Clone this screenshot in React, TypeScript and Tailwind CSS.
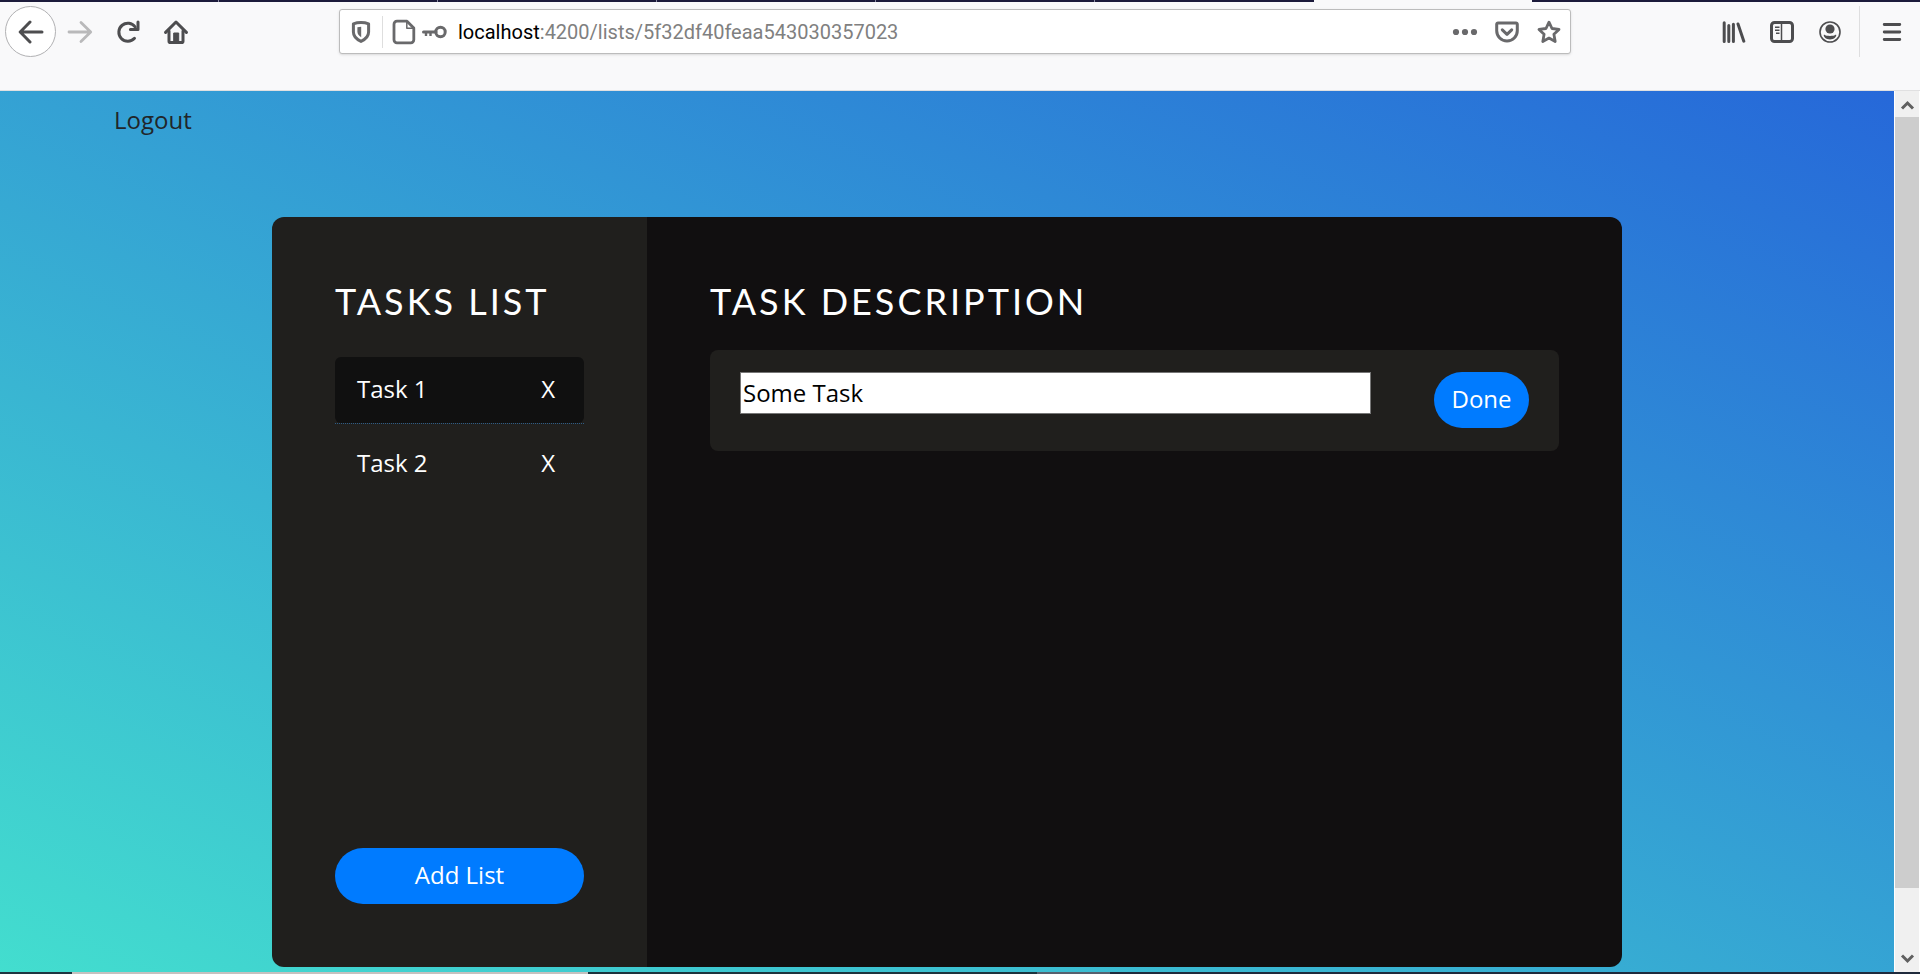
import { useState } from "react";
import type { ReactNode } from "react";

type IconProps = { label: string; children: ReactNode };

function IconButton({ label, children }: IconProps) {
  return (
    <button
      type="button"
      aria-label={label}
      className="flex h-12 w-12 shrink-0 items-center justify-center text-[#4d4d4f]"
    >
      {children}
    </button>
  );
}

function TabStrip() {
  return (
    <div className="flex h-[2px] shrink-0 bg-[#1c1b3b]">
      {[0, 1, 2, 3, 4].map((tab) => (
        <div key={tab} className="w-[219px] border-r border-[#8d8da5]" />
      ))}
      <div className="w-[219px]" />
      <div className="w-[218px] bg-[#f9f9fa]" />
    </div>
  );
}

function AddressBar() {
  return (
    <div className="flex h-[45px] w-[1232px] min-w-0 shrink items-center rounded-[3px] border border-[#bcbcbc] bg-white text-[#69696b] shadow-sm">
      <div className="flex w-[42px] shrink-0 justify-center">
        <svg viewBox="0 0 24 24" className="size-6" fill="none" stroke="currentColor" strokeWidth="3">
          <path d="M12 2.6c3 0 5.600.5 7.600 1.200v8.200c0 4.200-3.300 7.400-7.600 9.400-4.300-2-7.600-5.200-7.600-9.400V3.800C6.400 3.100 9 2.600 12 2.600z" strokeLinejoin="round" />
          <path d="M12.200 6.700v10.500c-2.400-1.300-3.800-3.200-3.800-5.400V7.200c1.200-.3 2.500-.5 3.800-.5z" fill="currentColor" stroke="none" />
        </svg>
      </div>
      <div className="h-8 w-px shrink-0 bg-[#dedede]" />
      <svg viewBox="0 0 24 26" className="ml-[9px] h-[26px] w-6 shrink-0" fill="none" stroke="currentColor" strokeWidth="2.800" strokeLinejoin="round">
        <path d="M5 2.200h10l6.800 6.800v11.800a3 3 0 0 1-3 3H5a3 3 0 0 1-3-3V5.200a3 3 0 0 1 3-3z" />
        <path d="M14.800 2.500v6.700h6.600" strokeWidth="1.500" />
      </svg>
      <svg viewBox="0 0 26 14" className="ml-[6px] h-[14px] w-[26px] shrink-0" fill="none" stroke="currentColor">
        <circle cx="18.500" cy="7" r="4.700" strokeWidth="3" />
        <path d="M1.500 7H14" strokeWidth="3" strokeLinecap="round" />
        <path d="M4 7v4M8.500 7v4" strokeWidth="2.400" />
      </svg>
      <div className="ml-[10px] min-w-0 grow truncate font-['Roboto',sans-serif] text-[20px] leading-7 text-[#808080]">
        <span className="text-black">localhost</span>:4200/lists/5f32df40feaa543030357023
      </div>
      <button type="button" aria-label="Page actions" className="flex w-[42px] shrink-0 justify-center">
        <svg viewBox="0 0 26 8" className="h-2 w-[26px]" fill="currentColor">
          <circle cx="4" cy="4" r="3.100" />
          <circle cx="13" cy="4" r="3.100" />
          <circle cx="22" cy="4" r="3.100" />
        </svg>
      </button>
      <button type="button" aria-label="Save to Pocket" className="flex w-[42px] shrink-0 justify-center">
        <svg viewBox="0 0 24 22" className="h-[22px] w-6" fill="none" stroke="currentColor" strokeWidth="3" strokeLinecap="round" strokeLinejoin="round">
          <path d="M3 2h18a1.300 1.300 0 0 1 1.300 1.300v6.400a10.300 10.300 0 0 1-20.600 0V3.300A1.300 1.300 0 0 1 3 2z" />
          <path d="M7.300 8.800l4.700 4.500 4.700-4.500" />
        </svg>
      </button>
      <button type="button" aria-label="Bookmark this page" className="flex w-[42px] shrink-0 justify-center">
        <svg viewBox="0 0 24 24" className="size-6" fill="none" stroke="currentColor" strokeWidth="2.800" strokeLinejoin="round">
          <path d="M12 2.200l3 6.300 7 .9-5.100 4.900 1.300 7.200-6.200-3.400-6.200 3.400 1.300-7.200L2 9.400l7-.9z" />
        </svg>
      </button>
    </div>
  );
}

function Toolbar() {
  return (
    <header className="flex h-[89px] shrink-0 items-start border-b border-[#e0e0e1] bg-[#f9f9fa] pt-1 pl-[5px]">
      <div className="flex h-[51px] w-full items-center justify-between">
        <nav aria-label="Browser navigation" className="flex items-center">
          <button
            type="button"
            aria-label="Back"
            className="flex size-[51px] items-center justify-center rounded-full border border-[#b1b1b3] bg-white text-[#4d4d4f]"
          >
            <svg viewBox="0 0 26 24" className="h-6 w-[26px]" fill="none" stroke="currentColor" strokeWidth="3" strokeLinecap="round" strokeLinejoin="round">
              <path d="M24 12H2.500M12 2L2.200 12 12 22" />
            </svg>
          </button>
          <IconButton label="Forward">
            <svg viewBox="0 0 26 24" className="h-6 w-[26px]" fill="none" stroke="#b9b9ba" strokeWidth="2.800" strokeLinecap="round" strokeLinejoin="round">
              <path d="M2 12h21.500M14 2.500L23.700 12 14 21.500" />
            </svg>
          </IconButton>
          <IconButton label="Reload">
            <svg viewBox="0 0 24 24" className="size-6" fill="none" stroke="currentColor" strokeWidth="3" strokeLinecap="round">
              <path d="M18.500 18.300A9 9 0 1 1 19.200 7" />
              <path d="M22 2v7.600h-7.600" strokeLinejoin="round" />
            </svg>
          </IconButton>
          <IconButton label="Home">
            <svg viewBox="0 0 24 24" className="size-6" fill="none" stroke="currentColor" strokeWidth="3" strokeLinecap="round" strokeLinejoin="round">
              <path d="M1.600 12.400L12 2l10.400 10.400" />
              <path d="M5 11v10.200a1.300 1.300 0 0 0 1.300 1.300h11.400a1.300 1.300 0 0 0 1.300-1.300V11" />
              <path d="M9.700 22v-9h5v9z" fill="currentColor" strokeWidth="1" />
            </svg>
          </IconButton>
        </nav>
        <AddressBar />
        <div className="flex items-center">
          <IconButton label="Library">
            <svg viewBox="0 0 24 22" className="h-[22px] w-6" fill="none" stroke="currentColor" strokeWidth="3" strokeLinecap="round">
              <path d="M2.200 1.800v18.600M6.800 4.600v15.800M11.400 3.200v17.200M16 3l5.800 17.200" />
            </svg>
          </IconButton>
          <IconButton label="Sidebars">
            <svg viewBox="0 0 24 22" className="h-[22px] w-6" fill="none" stroke="currentColor">
              <rect x="1.500" y="1.500" width="21" height="19" rx="3" strokeWidth="3" />
              <path d="M11.500 2v18" strokeWidth="1.500" />
              <path d="M5 6.300h4.500M5 9.300h4.500M6 12.300h3.500" strokeWidth="1.500" />
            </svg>
          </IconButton>
          <IconButton label="Account">
            <svg viewBox="0 0 24 24" className="size-6" fill="currentColor">
              <circle cx="12" cy="12" r="10" fill="none" stroke="currentColor" strokeWidth="1.600" />
              <circle cx="12" cy="9" r="4.600" />
              <path d="M6 14.500c1.500 1.200 3.500 1.400 6 1.400s4.500-.2 6-1.400c1.200 1.800-2 5-6 5s-7.200-3.200-6-5z" />
            </svg>
          </IconButton>
          <div className="ml-[5px] h-[51px] w-px bg-[#dededf]" />
          <div className="pr-1 pl-2">
            <IconButton label="Menu">
              <svg viewBox="0 0 20 20" className="size-5" fill="none" stroke="currentColor" strokeWidth="2.800" strokeLinecap="round">
                <path d="M2.200 2.500h15.600M2.200 10h15.600M2.200 17.500h15.600" />
              </svg>
            </IconButton>
          </div>
        </div>
      </div>
    </header>
  );
}

function TaskLists() {
  const [selected, setSelected] = useState("Task 1");
  return (
    <aside className="flex w-[375px] shrink-0 flex-col rounded-l-xl bg-[#201f1d] px-[63px] pt-[62px] pb-[63px]">
      <h1 className="font-['Lato',sans-serif] text-4xl leading-[44px] tracking-[3px] whitespace-nowrap">TASKS LIST</h1>
      <ul className="mt-[34px] flex grow flex-col gap-[7px]">
        {["Task 1", "Task 2"].map((name) => (
          <li
            key={name}
            className={
              name === selected
                ? "border-b border-dotted border-[#2d5c86]"
                : "border-b border-transparent"
            }
          >
            <div
              className={
                name === selected
                  ? "flex h-[66px] items-center justify-between rounded-md bg-[#101010] pr-[29px] pb-[2px] pl-[22px]"
                  : "flex h-[66px] items-center justify-between rounded-md pr-[29px] pb-[2px] pl-[22px]"
              }
            >
              <button type="button" onClick={() => setSelected(name)}>
                {name}
              </button>
              <button type="button" aria-label={`Delete ${name}`}>
                X
              </button>
            </div>
          </li>
        ))}
      </ul>
      <button type="button" className="h-14 rounded-full bg-[#007bff] pb-[2px]">
        Add List
      </button>
    </aside>
  );
}

function TaskDescription() {
  return (
    <section className="min-w-0 grow rounded-r-xl bg-[#110f10] px-[63px] pt-[62px]">
      <h2 className="font-['Lato',sans-serif] text-4xl leading-[44px] tracking-[3px]">TASK DESCRIPTION</h2>
      <form
        className="mt-[27px] flex h-[101px] items-start gap-[63px] rounded-lg bg-[#201f1d] px-[30px] pt-[22px]"
        onSubmit={(event) => event.preventDefault()}
      >
        <input
          type="text"
          aria-label="Task description"
          defaultValue="Some Task"
          className="h-[42px] min-w-0 grow border border-[#767676] bg-white px-[2px] pb-[2px] text-black"
        />
        <button type="submit" className="h-14 w-[95px] shrink-0 rounded-full bg-[#007bff] pb-[2px]">
          Done
        </button>
      </form>
    </section>
  );
}

function ScrollBar() {
  return (
    <div aria-hidden="true" className="flex w-[26px] shrink-0 flex-col border-x border-white bg-[#f0f0f0] text-[#606060]">
      <svg viewBox="0 0 24 26" className="h-[26px] w-6 shrink-0" fill="none" stroke="currentColor" strokeWidth="3">
        <path d="M7 17.500l5.500-5.500 5.500 5.500" />
      </svg>
      <div className="grow-[771] bg-[#cdcdcd]" />
      <div className="grow-[58]" />
      <svg viewBox="0 0 24 26" className="h-[26px] w-6 shrink-0" fill="none" stroke="currentColor" strokeWidth="3">
        <path d="M7 9.500l5.500 5.500 5.500-5.500" />
      </svg>
    </div>
  );
}

export default function App() {
  return (
    <div className="flex h-screen flex-col overflow-hidden">
      <TabStrip />
      <Toolbar />
      <div className="flex min-h-0 grow">
        <main className="min-w-0 grow overflow-hidden font-['Open_Sans',sans-serif] text-2xl leading-9 text-white">
          <div className="bg-[linear-gradient(24deg,#44e2ce,#2668d9)] pb-[70px]">
            <div className="flex h-[126px] items-start px-[114px] pt-[11px]">
              <a href="#logout" className="text-[#212529]">
                Logout
              </a>
            </div>
            <div className="mx-auto flex h-[750px] max-w-[1350px]">
              <TaskLists />
              <TaskDescription />
            </div>
          </div>
        </main>
        <ScrollBar />
      </div>
      <div className="flex h-[2px] shrink-0 bg-[#1f2a3c]">
        <div className="w-[72px] bg-[#1f3640]" />
        <div className="w-[516px] bg-[#c5c1bf]" />
        <div className="w-[449px] bg-[#1d333d]" />
        <div className="w-[73px] bg-[#56606e]" />
      </div>
    </div>
  );
}
